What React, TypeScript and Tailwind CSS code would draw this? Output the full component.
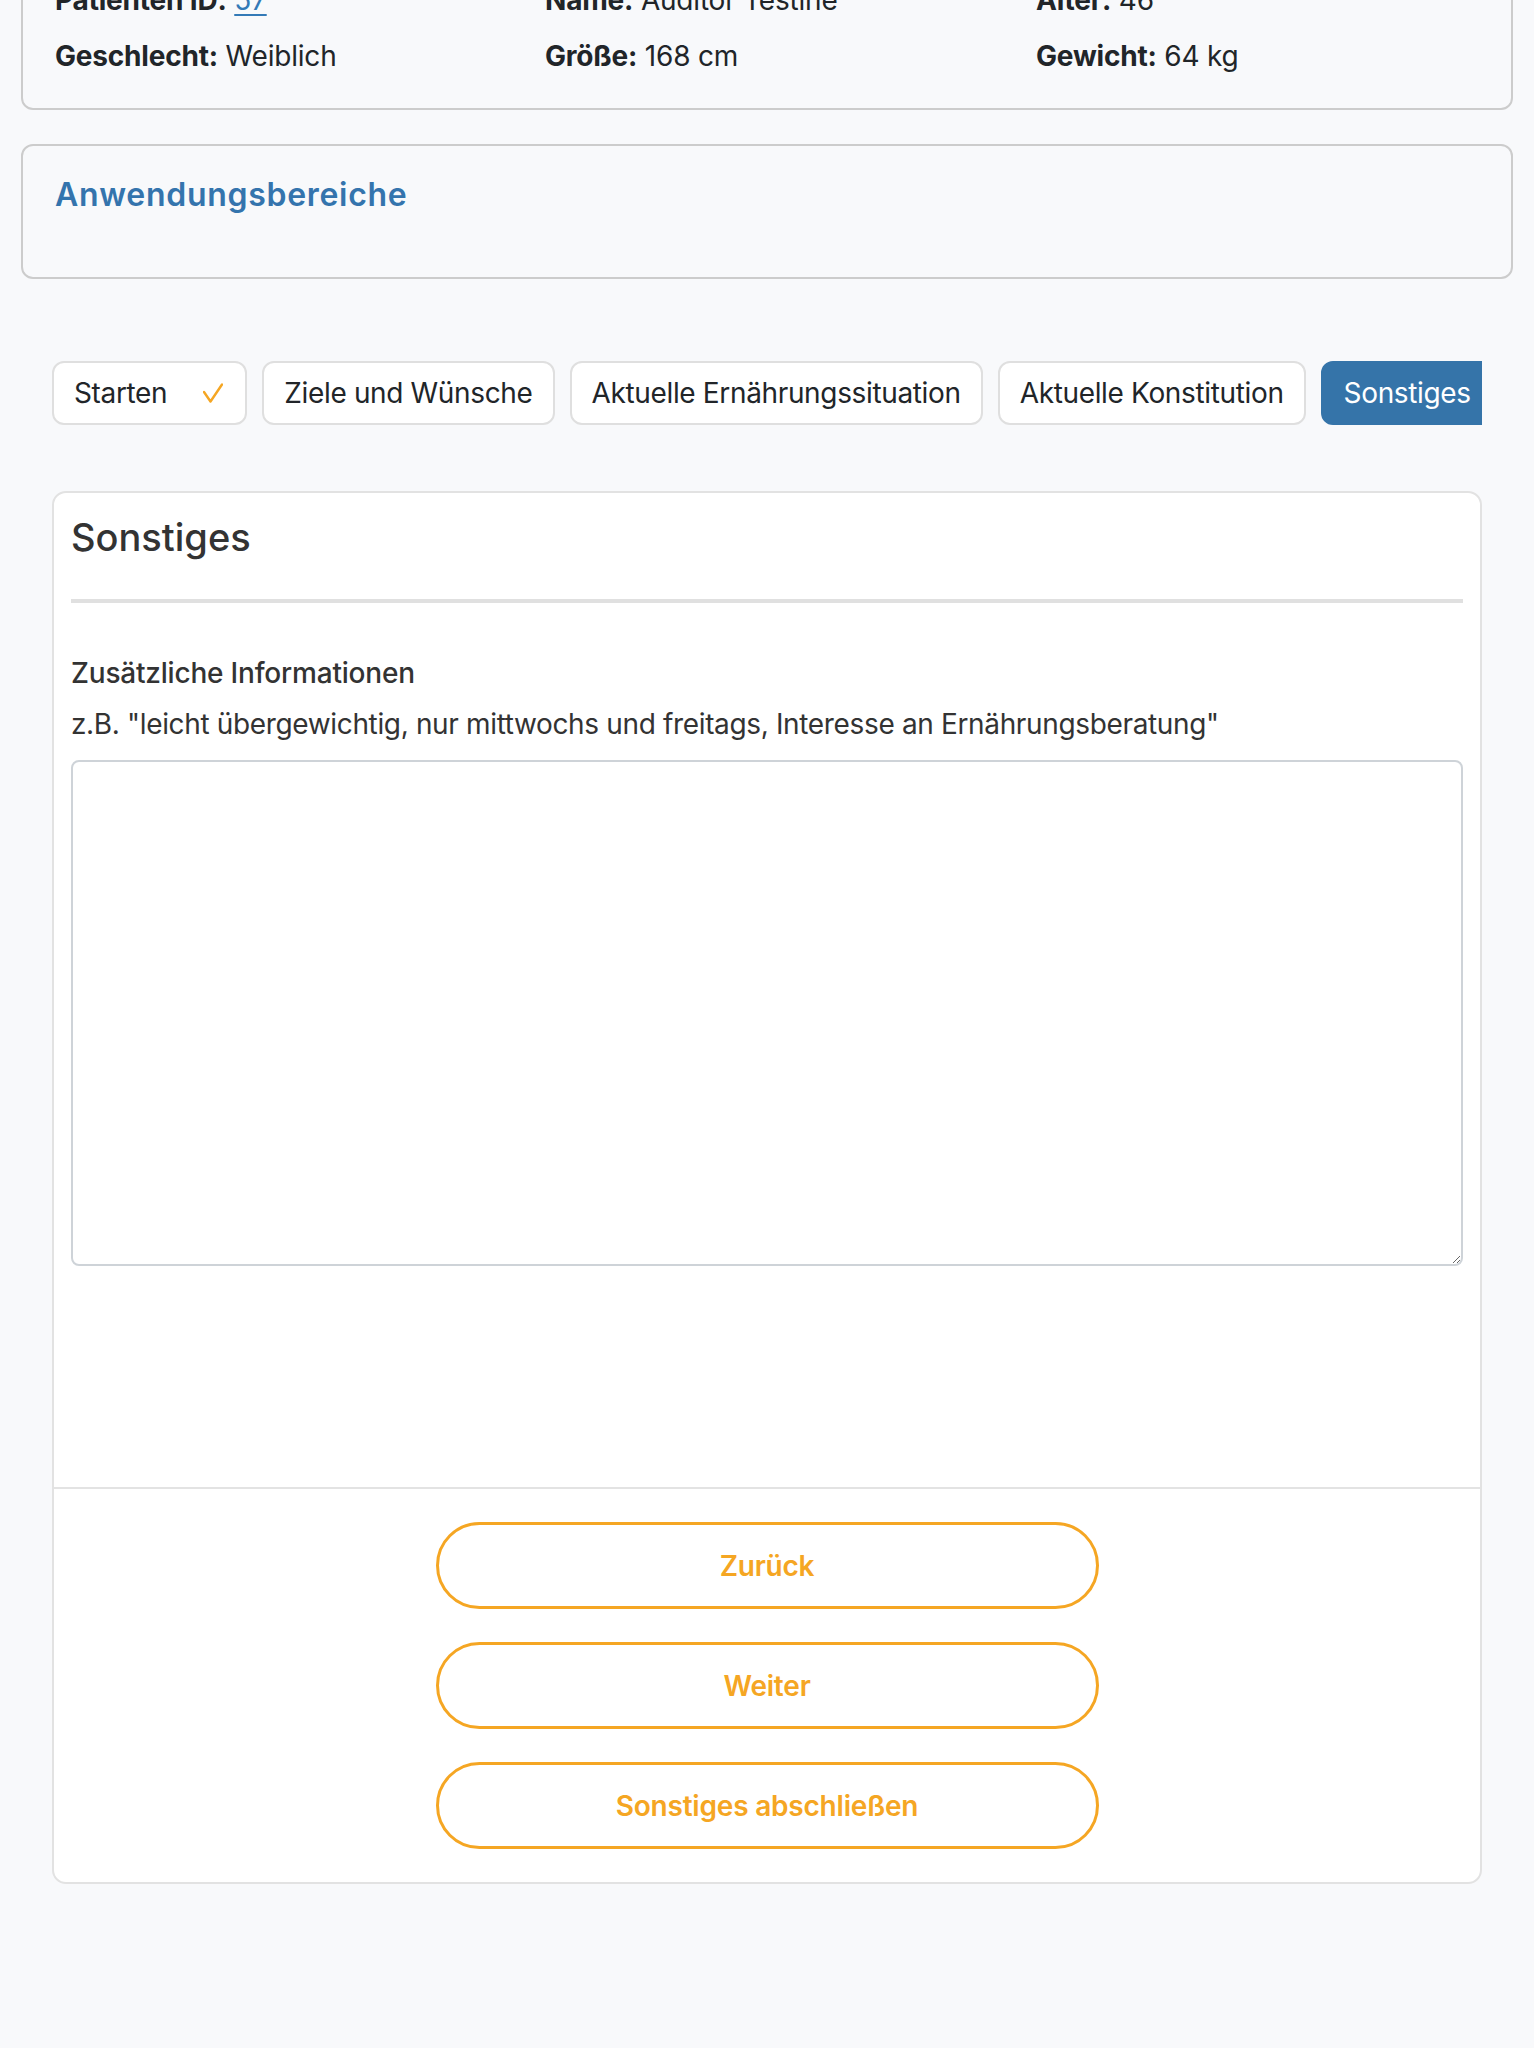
import React, { useState } from 'react';

const tabs = [
  { label: 'Starten', done: true },
  { label: 'Ziele und Wünsche', done: false },
  { label: 'Aktuelle Ernährungssituation', done: false },
  { label: 'Aktuelle Konstitution', done: false },
  { label: 'Sonstiges', done: false },
];

function CheckMark() {
  return (
    <svg width="20" height="20" viewBox="0 0 20 20" fill="none" className="ml-[36px] mr-[2px] shrink-0">
      <polyline points="1,9 7.5,18.5 19,1.5" stroke="#f5a623" strokeWidth="2.4" strokeLinecap="round" strokeLinejoin="round" />
    </svg>
  );
}

function InfoItem({ label, value, link }: { label: string; value: string; link?: boolean }) {
  return (
    <div className="leading-[42px] whitespace-nowrap">
      <span className="font-bold">{label}</span>{' '}
      {link ? <a href="#" className="text-[#337ab7] underline underline-offset-4">{value}</a> : <span>{value}</span>}
    </div>
  );
}

export default function App() {
  const [active, setActive] = useState(4);
  const [notes, setNotes] = useState('');

  return (
    <div className="min-h-screen bg-[#f8f9fb] font-['Inter','Liberation_Sans',sans-serif] text-[28px] text-[#212529] overflow-hidden">
      <div className="px-[21px]">
        {/* Patient summary */}
        <div className="-mt-[52px] border-2 border-[#cccccc] rounded-[12px] pl-[32px] pr-6 pt-[29px] pb-[31px]">
          <div className="grid grid-cols-[490px_491px_1fr] gap-y-[14px] tracking-[-0.2px]">
            <InfoItem label="Patienten ID:" value="57" link />
            <InfoItem label="Name:" value="Auditor Testine" />
            <InfoItem label="Alter:" value="46" />
            <InfoItem label="Geschlecht:" value="Weiblich" />
            <InfoItem label="Größe:" value="168 cm" />
            <InfoItem label="Gewicht:" value="64 kg" />
          </div>
        </div>

        {/* Anwendungsbereiche */}
        <div className="mt-[34px] border-2 border-[#cccccc] rounded-[12px] pl-[32px] pt-[30px] pb-[63px]">
          <h2 className="text-[32px] leading-[38px] font-semibold text-[#3474ad] tracking-[0.7px]">Anwendungsbereiche</h2>
        </div>
      </div>

      <div className="px-[52px]">
        {/* Step tabs */}
        <div className="mt-[82px] flex gap-[15px] overflow-hidden tracking-[-0.35px]">
          {tabs.map((t, i) => (
            <button
              key={t.label}
              onClick={() => setActive(i)}
              className={
                i === active
                  ? 'shrink-0 flex items-center rounded-[12px] border-2 border-[#3574a9] bg-[#3574a9] text-white px-[21px] py-[9px] leading-[42px]'
                  : 'shrink-0 flex items-center rounded-[12px] border-2 border-[#dfdfdf] bg-white text-[#212529] px-[20px] py-[9px] leading-[42px]'
              }
            >
              <span>{t.label}</span>
              {t.done && <CheckMark />}
            </button>
          ))}
        </div>

        {/* Step content */}
        <div className="mt-[66px] bg-white border-2 border-[#e2e2e2] rounded-[14px]">
          <div className="px-[17px] pt-[21px] pb-[221px]">
            <h1 className="text-[38px] leading-[46px] font-medium text-[#333333]">Sonstiges</h1>
            <div className="mt-[39px] h-[4px] bg-[#e0e0e0]" />

            <label className="block mt-[51px] font-medium text-[#333333] leading-[39px] tracking-[-0.2px]">Zusätzliche Informationen</label>
            <p className="mt-[12px] text-[#333333] leading-[39px] tracking-[-0.35px]">
              z.B. "leicht übergewichtig, nur mittwochs und freitags, Interesse an Ernährungsberatung"
            </p>
            <textarea
              value={notes}
              onChange={(e) => setNotes(e.target.value)}
              className="mt-[16px] block w-full h-[506px] border-2 border-[#ced3d8] rounded-[8px] bg-white p-3 outline-none"
            />
          </div>

          <div className="border-t-2 border-[#e3e3e3] pt-[33px] pb-[33px] flex flex-col items-center gap-[33px]">
            {['Zurück', 'Weiter', 'Sonstiges abschließen'].map((b) => (
              <button
                key={b}
                className="w-[663px] h-[87px] rounded-full border-[3px] border-[#f5a623] bg-white text-[#f5a623] font-semibold tracking-[-0.2px]"
              >
                {b}
              </button>
            ))}
          </div>
        </div>
      </div>
    </div>
  );
}
